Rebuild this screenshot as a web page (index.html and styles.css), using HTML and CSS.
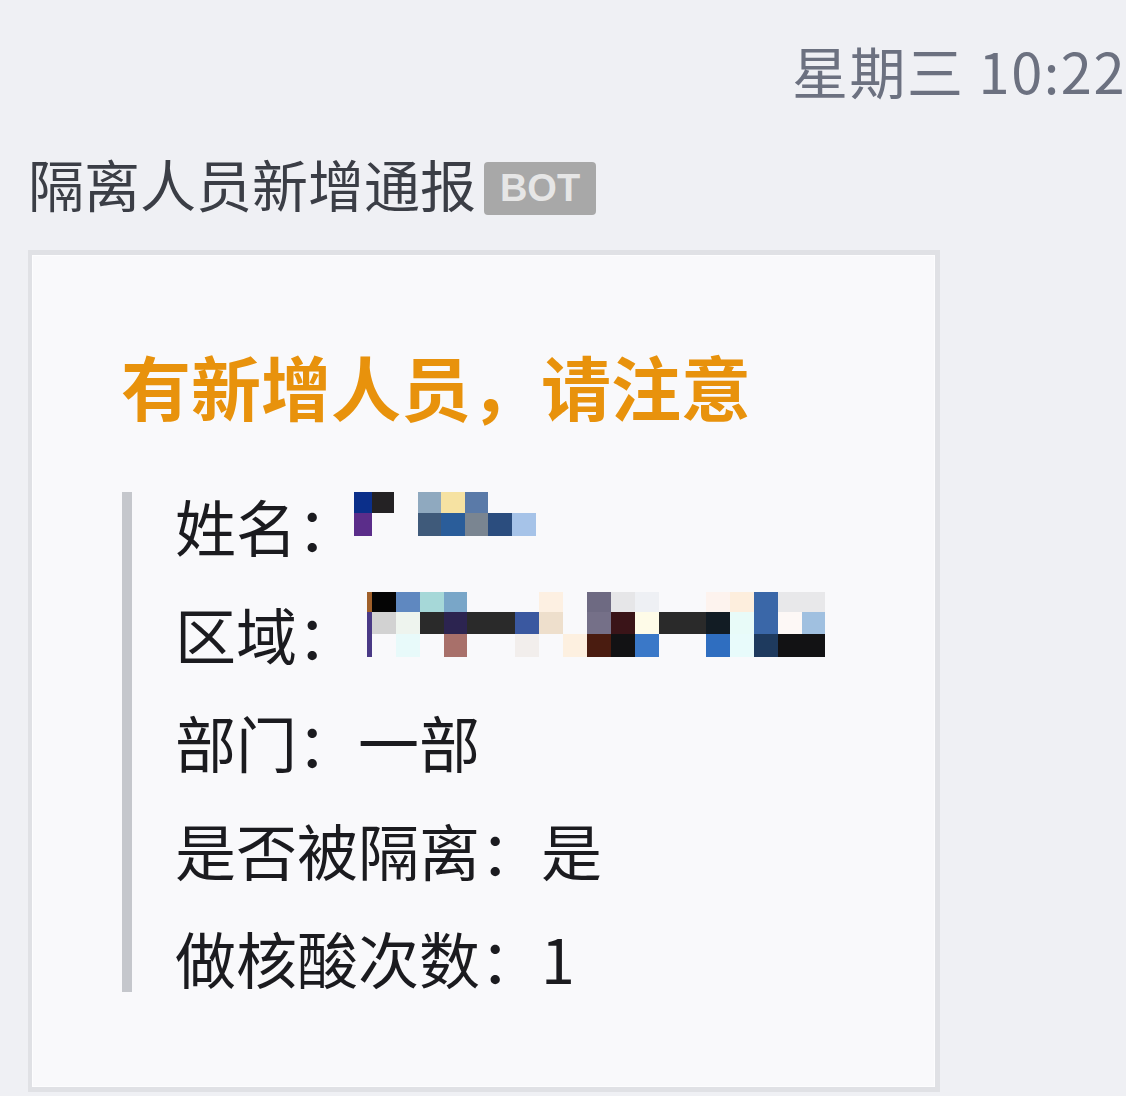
FILE: index.html
```html
<!DOCTYPE html>
<html lang="zh-CN">
<head>
<meta charset="utf-8">
<title>隔离人员新增通报</title>
<link rel="stylesheet" href="styles.css">
</head>
<body>
<div class="chat">
  <div class="time">星期三 10:22</div>
  <div class="sender">
    <span class="name">隔离人员新增通报</span>
    <span class="bot">BOT</span>
  </div>
  <div class="card">
    <div class="title">有新增人员，请注意</div>
    <div class="quote">
      <div class="row">
        <span class="label">姓名：</span>
        <svg class="mosaic mosaic-name" width="182" height="44" viewBox="0 0 182 44" shape-rendering="crispEdges">
          <rect x="0" y="0" width="18" height="21" fill="#0b2f8a"/>
          <rect x="18" y="0" width="22" height="21" fill="#242224"/>
          <rect x="64" y="0" width="23" height="21" fill="#8fa9bf"/>
          <rect x="87" y="0" width="24" height="21" fill="#f6e2a2"/>
          <rect x="111" y="0" width="23" height="21" fill="#5a7aa8"/>
          <rect x="0" y="21" width="18" height="23" fill="#5b2d8a"/>
          <rect x="64" y="21" width="23" height="23" fill="#3f5a7a"/>
          <rect x="87" y="21" width="24" height="23" fill="#2a5d9a"/>
          <rect x="111" y="21" width="23" height="23" fill="#7a8591"/>
          <rect x="134" y="21" width="24" height="23" fill="#2b4d7e"/>
          <rect x="158" y="21" width="24" height="23" fill="#a6c3e8"/>
        </svg>
      </div>
      <div class="row">
        <span class="label">区域：</span>
        <svg class="mosaic mosaic-area" width="460" height="65" viewBox="0 0 460 65" shape-rendering="crispEdges">
          <rect x="0" y="0" width="5" height="65" fill="#4a3a86"/>
          <rect x="0" y="0" width="5" height="20" fill="#a0602a"/>
          <!-- row A -->
          <rect x="5" y="0" width="24" height="20" fill="#050505"/>
          <rect x="29" y="0" width="24" height="20" fill="#5f88c0"/>
          <rect x="53" y="0" width="24" height="20" fill="#a6d8d8"/>
          <rect x="77" y="0" width="23" height="20" fill="#79a6c8"/>
          <rect x="172" y="0" width="24" height="20" fill="#fdf0e2"/>
          <rect x="220" y="0" width="24" height="20" fill="#6e6a82"/>
          <rect x="244" y="0" width="24" height="20" fill="#e6e6e8"/>
          <rect x="268" y="0" width="24" height="20" fill="#eef0f4"/>
          <rect x="339" y="0" width="24" height="20" fill="#fdf3ee"/>
          <rect x="363" y="0" width="24" height="20" fill="#fdeedd"/>
          <rect x="387" y="0" width="24" height="20" fill="#3a67a8"/>
          <rect x="411" y="0" width="24" height="20" fill="#e8e8ea"/>
          <rect x="435" y="0" width="23" height="20" fill="#e8e8ea"/>
          <!-- row B -->
          <rect x="5" y="20" width="24" height="22" fill="#d2d2d2"/>
          <rect x="29" y="20" width="24" height="22" fill="#eef4ee"/>
          <rect x="53" y="20" width="24" height="22" fill="#2a2a2a"/>
          <rect x="77" y="20" width="23" height="22" fill="#2c2450"/>
          <rect x="100" y="20" width="48" height="22" fill="#2a2a2a"/>
          <rect x="148" y="20" width="24" height="22" fill="#3a58a0"/>
          <rect x="172" y="20" width="24" height="22" fill="#eedfcc"/>
          <rect x="220" y="20" width="24" height="22" fill="#757088"/>
          <rect x="244" y="20" width="24" height="22" fill="#3a1418"/>
          <rect x="268" y="20" width="24" height="22" fill="#fefbe8"/>
          <rect x="292" y="20" width="47" height="22" fill="#2a2a2a"/>
          <rect x="339" y="20" width="24" height="22" fill="#121c24"/>
          <rect x="363" y="20" width="24" height="22" fill="#e8fbf8"/>
          <rect x="387" y="20" width="24" height="22" fill="#3a67a8"/>
          <rect x="411" y="20" width="24" height="22" fill="#fdf8f6"/>
          <rect x="435" y="20" width="23" height="22" fill="#a0c0e0"/>
          <!-- row C -->
          <rect x="29" y="42" width="24" height="23" fill="#e8fafa"/>
          <rect x="77" y="42" width="23" height="23" fill="#a8706a"/>
          <rect x="148" y="42" width="24" height="23" fill="#f2eeec"/>
          <rect x="196" y="42" width="24" height="23" fill="#fdf0e0"/>
          <rect x="220" y="42" width="24" height="23" fill="#4a1c10"/>
          <rect x="244" y="42" width="24" height="23" fill="#121214"/>
          <rect x="268" y="42" width="24" height="23" fill="#3a78c8"/>
          <rect x="339" y="42" width="24" height="23" fill="#2f6ec0"/>
          <rect x="363" y="42" width="24" height="23" fill="#e8fbfb"/>
          <rect x="387" y="42" width="24" height="23" fill="#1e3a5e"/>
          <rect x="411" y="42" width="47" height="23" fill="#121214"/>
        </svg>
      </div>
      <div class="row"><span class="label">部门：</span><span class="value">一部</span></div>
      <div class="row"><span class="label">是否被隔离：</span><span class="value">是</span></div>
      <div class="row"><span class="label">做核酸次数：</span><span class="value">1</span></div>
    </div>
  </div>
</div>
</body>
</html>
```

FILE: styles.css
```css
html, body {
  margin: 0;
  padding: 0;
  background: #eff0f4;
}

body {
  font-family: "Noto Sans CJK SC", "Microsoft YaHei", sans-serif;
}

.chat {
  display: flex;
  flex-direction: column;
  padding: 0;
}

.time {
  margin-top: 42px;
  font-size: 56px;
  line-height: 56px;
  height: 56px;
  letter-spacing: 1.5px;
  text-align: right;
  color: #6c7180;
  white-space: nowrap;
}

.sender {
  margin-top: 59px;
  display: flex;
  align-items: center;
  height: 56px;
  padding-left: 28px;
}

.name {
  font-size: 56px;
  line-height: 56px;
  margin-top: -5px;
  color: #3b3e46;
  white-space: nowrap;
}

.bot {
  margin-left: 8px;
  margin-top: 6px;
  width: 112px;
  height: 53px;
  display: flex;
  align-items: center;
  justify-content: center;
  background: #a8a8a8;
  border-radius: 4px;
  color: #e6e6e6;
  font-family: "Liberation Sans", Arial, sans-serif;
  font-weight: bold;
  font-size: 38px;
  line-height: 1;
}

.card {
  margin: 37px 0 0 28px;
  width: 912px;
  box-sizing: border-box;
  border: 5px solid #e0e1e5;
  border-left-width: 4px;
  background: #f9f9fb;
  box-shadow: inset 0 0 0 1px #fdfdfe;
  padding: 91px 0 95px 89px;
}

.title {
  font-size: 70px;
  line-height: 80px;
  height: 80px;
  font-weight: bold;
  color: #e8920c;
  white-space: nowrap;
}

.quote {
  margin-top: 66px;
  margin-left: 1px;
  border-left: 10px solid #c5c7cc;
  padding-left: 43px;
  display: flex;
  flex-direction: column;
  gap: 40px;
}

.row {
  display: flex;
  align-items: flex-start;
  height: 68px;
  font-size: 61px;
  line-height: 68px;
  color: #1b1b1f;
  white-space: nowrap;
}

.mosaic {
  display: block;
  flex: none;
}

.mosaic-name {
  margin-left: -4px;
  margin-top: 0;
}

.mosaic-area {
  margin-left: 9px;
  margin-top: -8px;
}
```
